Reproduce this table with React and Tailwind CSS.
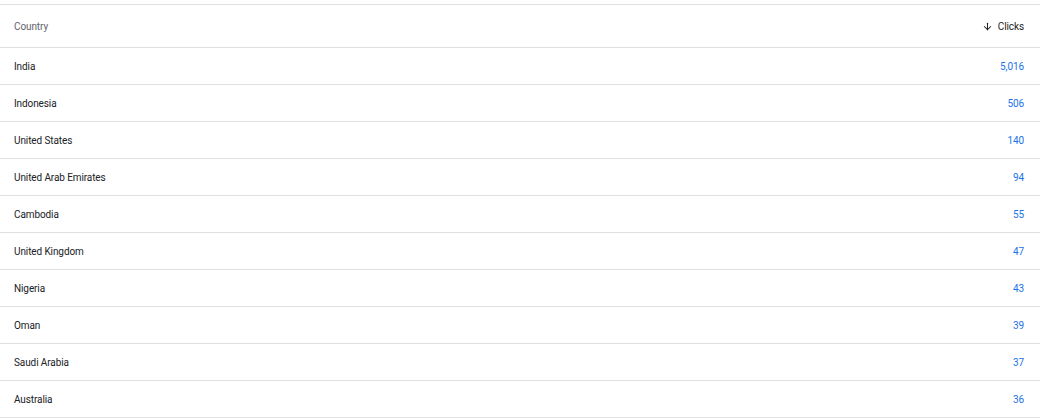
import { ArrowDown } from "lucide-react";

const rows = [
  ["India", "5,016"],
  ["Indonesia", "506"],
  ["United States", "140"],
  ["United Arab Emirates", "94"],
  ["Cambodia", "55"],
  ["United Kingdom", "47"],
  ["Nigeria", "43"],
  ["Oman", "39"],
  ["Saudi Arabia", "37"],
  ["Australia", "36"],
];

export default function App() {
  return (
    <div className="w-[1040px] h-[418px] bg-white pt-1 font-['Roboto',sans-serif] tracking-[-0.1px]">
      <div className="border-t border-[#e0e0e0]">
        {/* Header */}
        <div className="h-[43px] flex items-center justify-between pl-[14px] pr-4 pt-[1px] border-b border-[#e0e0e0]">
          <span className="text-[10px] text-[#5f6368]">Country</span>
          <span className="flex items-center gap-[5px] text-[10px] text-[#202124]">
            <ArrowDown size={11} strokeWidth={2.2} />
            Clicks
          </span>
        </div>
        {rows.map(([country, clicks]) => (
          <div
            key={country}
            className="h-[37px] flex items-center justify-between pl-[14px] pr-4 pt-[1px] border-b border-[#e0e0e0]"
          >
            <span className="text-[10px] text-[#202124]">{country}</span>
            <span className="text-[10px] text-[#1a73e8]">{clicks}</span>
          </div>
        ))}
      </div>
    </div>
  );
}
